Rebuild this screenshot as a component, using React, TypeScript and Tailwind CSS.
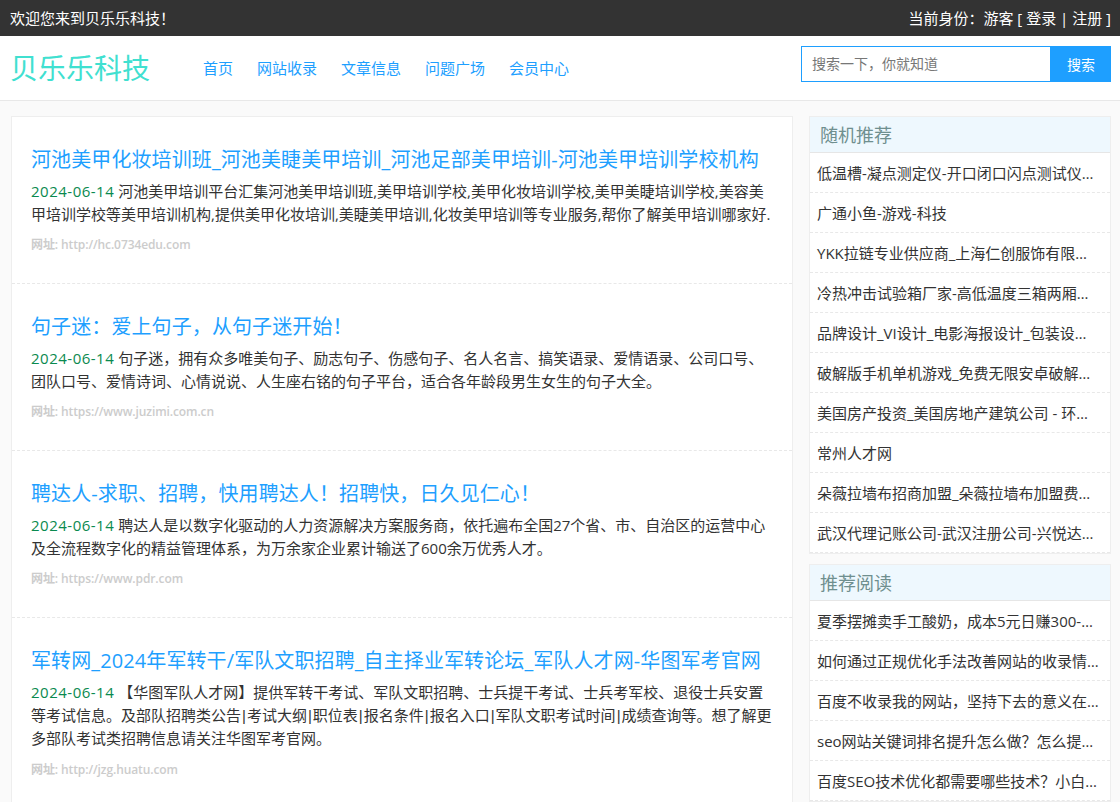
const FONT = "font-['Open_Sans','Noto_Sans_CJK_SC',sans-serif]";

const navItems = ["首页", "网站收录", "文章信息", "问题广场", "会员中心"];

const articles = [
  {
    title: "河池美甲化妆培训班_河池美睫美甲培训_河池足部美甲培训-河池美甲培训学校机构",
    desc: "河池美甲培训平台汇集河池美甲培训班,美甲培训学校,美甲化妆培训学校,美甲美睫培训学校,美容美甲培训学校等美甲培训机构,提供美甲化妆培训,美睫美甲培训,化妆美甲培训等专业服务,帮你了解美甲培训哪家好.",
    url: "http://hc.0734edu.com",
  },
  {
    title: "句子迷\uFF1A爱上句子\uFF0C从句子迷开始\uFF01",
    desc: "句子迷\uFF0C拥有众多唯美句子、励志句子、伤感句子、名人名言、搞笑语录、爱情语录、公司口号、团队口号、爱情诗词、心情说说、人生座右铭的句子平台\uFF0C适合各年龄段男生女生的句子大全。",
    url: "https://www.juzimi.com.cn",
  },
  {
    title: "聘达人-求职、招聘\uFF0C快用聘达人\uFF01招聘快\uFF0C日久见仁心\uFF01",
    desc: "聘达人是以数字化驱动的人力资源解决方案服务商\uFF0C依托遍布全国27个省、市、自治区的运营中心及全流程数字化的精益管理体系\uFF0C为万余家企业累计输送了600余万优秀人才。",
    url: "https://www.pdr.com",
  },
  {
    title: "军转网_2024年军转干/军队文职招聘_自主择业军转论坛_军队人才网-华图军考官网",
    desc: "【华图军队人才网】提供军转干考试、军队文职招聘、士兵提干考试、士兵考军校、退役士兵安置等考试信息。及部队招聘类公告|考试大纲|职位表|报名条件|报名入口|军队文职考试时间|成绩查询等。想了解更多部队考试类招聘信息请关注华图军考官网。",
    url: "http://jzg.huatu.com",
  },
];

const randomList = [
  "低温槽-凝点测定仪-开口闭口闪点测试仪厂家",
  "广通小鱼-游戏-科技",
  "YKK拉链专业供应商_上海仁创服饰有限公司",
  "冷热冲击试验箱厂家-高低温度三箱两厢试验箱",
  "品牌设计_VI设计_电影海报设计_包装设计公司",
  "破解版手机单机游戏_免费无限安卓破解版下载",
  "美国房产投资_美国房地产建筑公司 - 环球地产",
  "常州人才网",
  "朵薇拉墙布招商加盟_朵薇拉墙布加盟费多少钱",
  "武汉代理记账公司-武汉注册公司-兴悦达财税公司",
];

const readList = [
  "夏季摆摊卖手工酸奶\uFF0C成本5元日赚300-500元",
  "如何通过正规优化手法改善网站的收录情况和排名",
  "百度不收录我的网站\uFF0C坚持下去的意义在哪里呢",
  "seo网站关键词排名提升怎么做\uFF1F怎么提升排名呢",
  "百度SEO技术优化都需要哪些技术\uFF1F小白必看教程",
];

// Open Sans has a very wide pipe, the reference's is narrow
function Pipes({ text }: { text: string }) {
  return (
    <>
      {text.split("|").map((part, i) => (
        <span key={i}>
          {i > 0 && <span className="font-['Liberation_Sans'] px-px">|</span>}
          {part}
        </span>
      ))}
    </>
  );
}

function SideBox({ title, items }: { title: string; items: string[] }) {
  return (
    <div className="bg-white border border-[#eeeeee] mb-[10px]">
      <h3 className="h-9 leading-9 pl-[10px] text-[18px] font-normal text-[#6f8f8f] bg-[#eef8fe] border-b border-[#e6e6e6]">
        {title}
      </h3>
      <ul>
        {items.map((item) => (
          <li
            key={item}
            className="h-10 leading-[40px] pl-[7px] pr-[10px] text-[15px] text-[#333333] truncate border-b border-dashed border-[#e8e8e8]"
          >
            {item}
          </li>
        ))}
      </ul>
    </div>
  );
}

export default function App() {
  return (
    <div className={`h-[802px] overflow-hidden bg-[#fafafa] ${FONT}`}>
      <div className="h-9 bg-[#333333] text-white text-[15px] leading-9 flex justify-between pl-[10px] pr-[9px]">
        <span>{"欢迎您来到贝乐乐科技\uFF01"}</span>
        <span>{"当前身份\uFF1A游客 [ 登录 | 注册 ]"}</span>
      </div>

      <header className="h-[65px] bg-white border-b border-[#e8e8e8] flex items-center pl-[10px] pr-[9px]">
        <div className="text-[28px] text-[#40e0d0] w-[193px]">贝乐乐科技</div>
        <nav className="flex gap-6 text-[15px] text-[#1e9fff]">
          {navItems.map((n) => (
            <a key={n}>{n}</a>
          ))}
        </nav>
        <div className="ml-auto mb-2 flex h-9 w-[310px]">
          <div className="flex-1 border border-[#1e9fff] pl-[10px] text-[14px] leading-[34px] text-[#777777]">
            {"搜索一下\uFF0C你就知道"}
          </div>
          <button className="w-[60px] bg-[#1e9fff] text-white text-[14px]">搜索</button>
        </div>
      </header>

      <main className="flex gap-4 pt-[15px] pl-[11px] pr-[9px]">
        <section className="w-[782px] shrink-0 bg-white border border-[#eeeeee]">
          {articles.map((a) => (
            <article key={a.url} className="pl-[19px] pr-5 pt-[29px] pb-[28px] border-b border-dashed border-[#e8e8e8]">
              <h2 className="text-[20px] leading-[28px] font-normal tracking-[0.1px] text-[#1e9fff]">{a.title}</h2>
              <p className="mt-[6px] text-[15px] leading-[22.5px] text-[#333333]">
                <span className="text-[#0a8a4f] tracking-[0.5px]">2024-06-14</span> <Pipes text={a.desc} />
              </p>
              <div className="mt-[10px] text-[12px] font-semibold leading-5 tracking-[-0.1px] text-[#cccccc]">网址: {a.url}</div>
            </article>
          ))}
        </section>
        <aside className="flex-1 min-w-0">
          <SideBox title="随机推荐" items={randomList} />
          <SideBox title="推荐阅读" items={readList} />
        </aside>
      </main>
    </div>
  );
}
